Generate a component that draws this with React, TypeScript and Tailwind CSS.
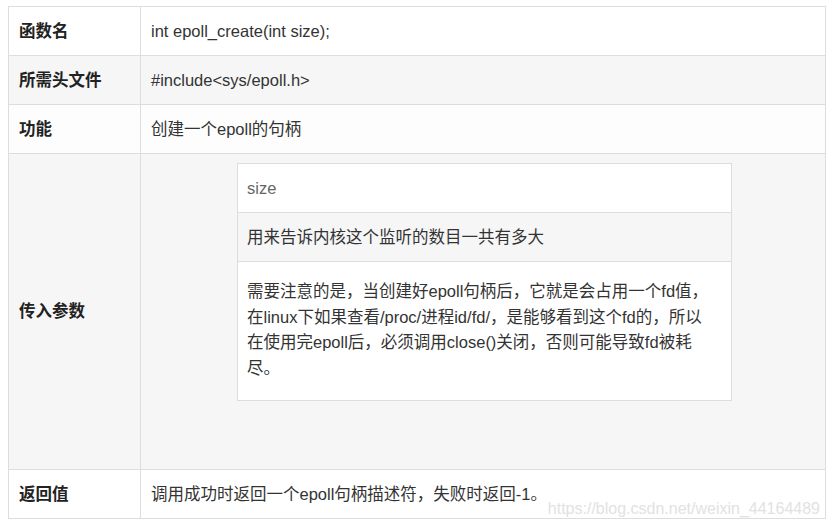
const font = { fontFamily: '"Liberation Sans", "Noto Sans CJK SC", sans-serif' }

function Row({ label, children, bg, h }: { label: string; children: React.ReactNode; bg: string; h: string }) {
  return (
    <div className={`flex border-t border-[#dddddd] ${bg} ${h}`}>
      <div className="w-[131px] flex-shrink-0 flex items-center pl-[10px] font-bold text-[#222]">{label}</div>
      <div className="flex-1 border-l border-[#dddddd] flex items-center pl-[10px] text-[#333]">{children}</div>
    </div>
  )
}

export default function App() {
  return (
    <div className="relative w-[830px] h-[528px] bg-white text-[16.5px]" style={font}>
      <div className="absolute left-[8px] top-[6px] w-[818px] border-x border-b border-[#dddddd]">
        <Row label="函数名" bg="bg-white" h="h-[49px]">int epoll_create(int size);</Row>
        <Row label="所需头文件" bg="bg-[#f6f6f6]" h="h-[49px]">#include&lt;sys/epoll.h&gt;</Row>
        <Row label="功能" bg="bg-[#fdfdfd]" h="h-[49px]">创建一个epoll的句柄</Row>

        {/* 传入参数 */}
        <div className="flex border-t border-[#dddddd] bg-[#f6f6f6] h-[316px]">
          <div className="w-[131px] flex-shrink-0 flex items-center pl-[10px] font-bold text-[#222]">传入参数</div>
          <div className="flex-1 border-l border-[#dddddd] pt-[9px]">
            <div className="ml-[96px] w-[495px] border-x border-b border-[#dddddd]">
              <div className="h-[49px] border-t border-[#dddddd] bg-white flex items-center pl-[9px] text-[#666]">size</div>
              <div className="h-[49px] border-t border-[#dddddd] bg-[#f6f6f6] flex items-center pl-[9px] text-[#333]">
                用来告诉内核这个监听的数目一共有多大
              </div>
              <div className="h-[139px] border-t border-[#dddddd] bg-white pl-[9px] pt-[17px] leading-[25.5px] text-[#333]">
                需要注意的是，当创建好epoll句柄后，它就是会占用一个fd值，<br />
                在linux下如果查看/proc/进程id/fd/，是能够看到这个fd的，所以<br />
                在使用完epoll后，必须调用close()关闭，否则可能导致fd被耗<br />
                尽。
              </div>
            </div>
          </div>
        </div>

        <Row label="返回值" bg="bg-white" h="h-[49px]">调用成功时返回一个epoll句柄描述符，失败时返回-1。</Row>
      </div>

      {/* watermark */}
      <div className="absolute right-[10px] top-[500px] text-[16px] leading-[18px] text-[#e2e2e2]">
        https://blog.csdn.net/weixin_44164489
      </div>
    </div>
  )
}
